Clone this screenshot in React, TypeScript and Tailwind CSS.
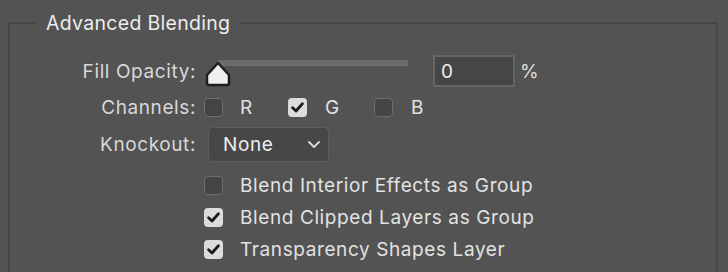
import React from "react";

// 체크박스 하나
const Check = ({ checked }: { checked: boolean }) =>
    checked ? (
        <div className="flex items-center justify-center w-[19px] h-[19px] rounded-[4px] bg-[#dcdcdc] shrink-0">
            <svg width="13" height="11" viewBox="0 0 13 11">
                <path d="M1.6 5.8 L5 9 L11.4 1.8" fill="none" stroke="#1c1c1c" strokeWidth="2.8" strokeLinecap="round" strokeLinejoin="round" />
            </svg>
        </div>
    ) : (
        <div className="w-[19px] h-[19px] rounded-[4px] bg-[#444444] border-[1.5px] border-[#6e6e6e] shrink-0" />
    );

const OptionRow = ({ checked, label }: { checked: boolean; label?: string }) => (
    <div className="flex items-center h-[32px] pl-[194px]">
        <Check checked={checked} />
        {label && <span className="ml-[17px] text-[#e2e2e2]">{label}</span>}
    </div>
);

const App = () => {
    return (
        <div
            className="w-[728px] h-[272px] overflow-hidden bg-[#535353] text-[19px] leading-none tracking-[0.6px]"
            style={{ fontFamily: "Inter, 'Liberation Sans', sans-serif" }}
        >
            <fieldset className="ml-[8px] mt-[11px] w-[710px] h-[400px] border-2 border-[#464646] p-0 m-0">
                {/** 타이틀 */}
                <legend className="ml-[27px] px-[9px] text-[19.5px] tracking-[0.3px] leading-[24px] text-[#ececec]">
                    Advanced Blending
                </legend>

                {/** Fill Opacity */}
                <div className="flex items-center h-[32px] mt-[20px]">
                    <div className="w-[186px] text-right text-[#d8d8d8]">Fill Opacity:</div>
                    <div className="relative ml-[9px] w-[204px] h-[32px]">
                        <div className="absolute left-[13px] top-[5px] w-[190px] h-[6px] bg-[#6c6c6c]" />
                        <svg className="absolute left-0 top-[6px]" width="26" height="26" viewBox="0 0 26 26">
                            <path d="M13 2 L24 14 L24 22 Q24 24 22 24 L4 24 Q2 24 2 22 L2 14 Z" fill="#efefef" stroke="#1e1e1e" strokeWidth="2.5" strokeLinejoin="round" />
                        </svg>
                    </div>
                    <div className="ml-[24px] w-[82px] h-[32px] border-2 border-[#656565] bg-[#464646] flex items-center pl-[6px] text-[#eeeeee]">
                        0
                    </div>
                    <span className="ml-[5px] text-[#dddddd]">%</span>
                </div>

                {/** Channels */}
                <div className="flex items-center h-[20px] mt-[10px]">
                    <div className="w-[186px] text-right text-[#d8d8d8]">Channels:</div>
                    <div className="ml-[8px] flex items-center">
                        <Check checked={false} />
                        <span className="ml-[17px] w-[13px] text-[#e2e2e2]">R</span>
                    </div>
                    <div className="ml-[35px] flex items-center">
                        <Check checked={true} />
                        <span className="ml-[18px] w-[13px] text-[#e2e2e2]">G</span>
                    </div>
                    <div className="ml-[36px] flex items-center">
                        <Check checked={false} />
                        <span className="ml-[18px] text-[#e2e2e2]">B</span>
                    </div>
                </div>

                {/** Knockout */}
                <div className="flex items-center h-[35px] mt-[10px]">
                    <div className="w-[186px] text-right text-[#d8d8d8]">Knockout:</div>
                    <div className="ml-[12px] w-[121px] h-[35px] rounded-[5px] border border-[#5e5e5e] bg-[#474747] flex items-center justify-between pl-[14px] pr-[7px] text-[#eeeeee]">
                        <span>None</span>
                        <svg width="14" height="9" viewBox="0 0 14 9">
                            <path d="M2 2 L7 7 L12 2" fill="none" stroke="#dddddd" strokeWidth="1.8" strokeLinecap="round" strokeLinejoin="round" />
                        </svg>
                    </div>
                </div>

                {/** 옵션 */}
                <div className="mt-[7px]">
                    <OptionRow checked={false} label="Blend Interior Effects as Group" />
                    <OptionRow checked={true} label="Blend Clipped Layers as Group" />
                    <OptionRow checked={true} label="Transparency Shapes Layer" />
                    <OptionRow checked={false} />
                </div>
            </fieldset>
        </div>
    );
};

export default App;
